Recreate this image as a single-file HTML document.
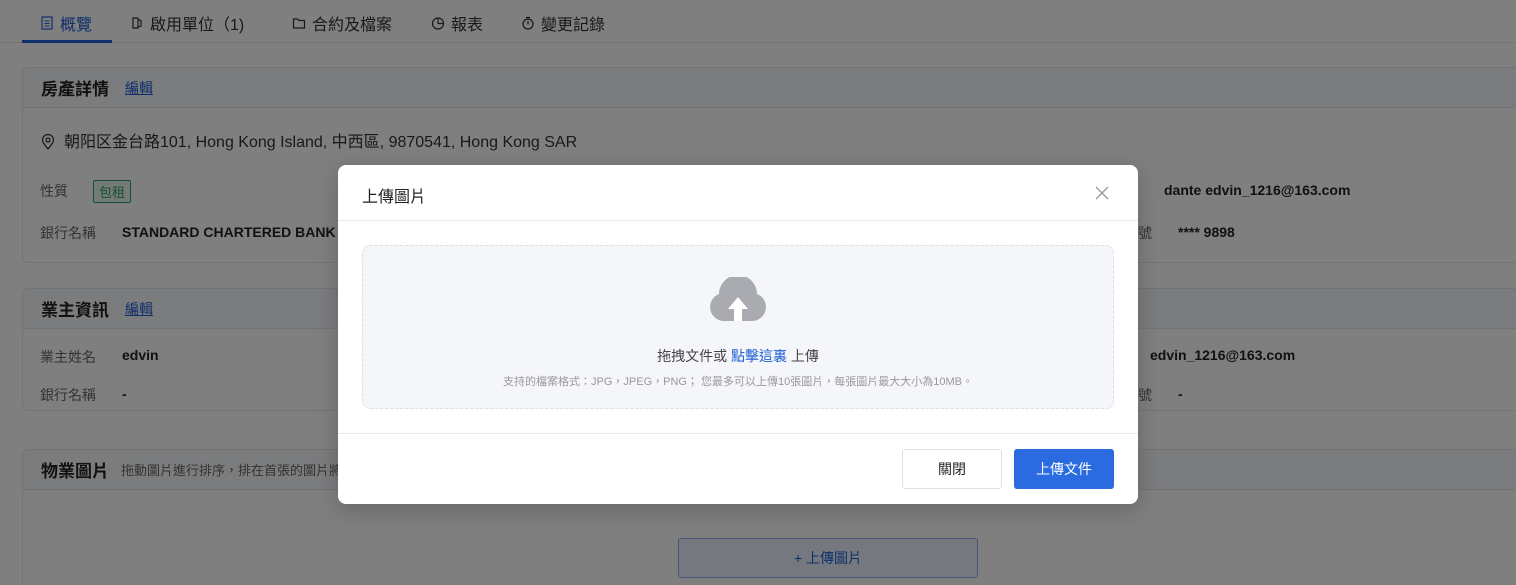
<!DOCTYPE html>
<html><head><meta charset="utf-8"><style>
*{box-sizing:border-box;margin:0;padding:0}
html,body{width:1516px;height:585px;overflow:hidden}
body{background:#fff;font-family:"Liberation Sans","Noto Sans CJK TC",sans-serif;color:#333;position:relative;font-size:14px}
.abs{position:absolute}
.tabs{position:absolute;left:0;top:0;width:1516px;height:43px;border-bottom:1px solid #e5e6eb}
.tab{position:absolute;top:11px;font-size:16px;color:#333;white-space:nowrap;display:flex;align-items:center;gap:6px}
.tab svg{width:14px;height:14px}
.card{position:absolute;left:22px;width:1520px;border:1px solid #e5e6eb;border-radius:6px;background:#fff}
.ch{height:40px;background:#f7f8fa;border-bottom:1px solid #e5e6eb;padding-left:18px;display:flex;align-items:center;border-radius:6px 6px 0 0}
.ch b{font-size:17px;color:#222}
.ch a{color:#1d5fd6;text-decoration:underline;font-size:14px;margin-left:16px}
.lbl{position:absolute;color:#666;font-size:14px}
.val{position:absolute;font-weight:bold;font-size:14px;color:#222}
.ov{position:absolute;left:0;top:0;width:1516px;height:585px;background:rgba(0,0,0,0.5)}
.modal{position:absolute;left:338px;top:165px;width:800px;height:339px;background:#fff;border-radius:8px;box-shadow:0 6px 24px rgba(0,0,0,.2)}
</style></head><body>
<div class="tabs">
<div class="tab" style="left:40px;color:#1d5fd6"><svg viewBox="0 0 14 14"><rect x="2" y="1" width="10" height="12" fill="none" stroke="#1d5fd6" stroke-width="1.2"/><path d="M4.5 5H9.5M4.5 7.5H9.5M4.5 10H9.5" stroke="#1d5fd6"/></svg>概覽</div>
<div class="abs" style="left:22px;top:40px;width:90px;height:3px;background:#1d5fd6"></div>
<div class="tab" style="left:130px"><svg viewBox="0 0 14 14"><path d="M3 2H8V12H3ZM8 3.5L11 4.5V10L8 11" fill="none" stroke="#333" stroke-width="1.2"/></svg>啟用單位（1)</div>
<div class="tab" style="left:292px"><svg viewBox="0 0 14 14"><path d="M1.5 3H5.5L7 4.5H12.5V12H1.5Z" fill="none" stroke="#333" stroke-width="1.2"/></svg>合約及檔案</div>
<div class="tab" style="left:431px"><svg viewBox="0 0 14 14"><circle cx="7" cy="7.5" r="5.5" fill="none" stroke="#333" stroke-width="1.2"/><path d="M7 2V7.5H12.5" fill="none" stroke="#333" stroke-width="1.2"/></svg>報表</div>
<div class="tab" style="left:521px"><svg viewBox="0 0 14 14"><circle cx="7" cy="8" r="5" fill="none" stroke="#333" stroke-width="1.2"/><path d="M5 1.5H9M7 5V8.5" stroke="#333" stroke-width="1.2"/></svg>變更記錄</div>
</div>
<div class="card" style="top:67px;height:196px"><div class="ch"><b>房產詳情</b><a>編輯</a></div></div>
<svg class="abs" style="left:41px;top:134px" width="14" height="16" viewBox="0 0 14 16"><path d="M7 15C3 10 1.5 8 1.5 6A5.5 5.5 0 0 1 12.5 6C12.5 8 11 10 7 15Z" fill="none" stroke="#333" stroke-width="1.2"/><circle cx="7" cy="6" r="2" fill="none" stroke="#333" stroke-width="1.2"/></svg>
<div class="abs" style="left:64px;top:128px;font-size:16px;color:#333">朝阳区金台路101, Hong Kong Island, 中西區, 9870541, Hong Kong SAR</div>
<div class="lbl" style="left:40px;top:181px">性質</div>
<div class="abs" style="left:93px;top:180px;border:1px solid #2a9d6f;color:#2a9d6f;background:#e8f6ef;font-size:13px;padding:1px 5px;border-radius:2px">包租</div>
<div class="lbl" style="left:40px;top:223px">銀行名稱</div>
<div class="val" style="left:122px;top:224px">STANDARD CHARTERED BANK</div>
<div class="val" style="left:1164px;top:182px">dante edvin_1216@163.com</div>
<div class="lbl" style="left:1138px;top:223px">號</div>
<div class="val" style="left:1178px;top:224px">**** 9898</div>
<div class="card" style="top:288px;height:123px"><div class="ch"><b>業主資訊</b><a>編輯</a></div></div>
<div class="lbl" style="left:40px;top:347px">業主姓名</div><div class="val" style="left:122px;top:347px">edvin</div>
<div class="lbl" style="left:40px;top:385px">銀行名稱</div><div class="val" style="left:122px;top:386px">-</div>
<div class="val" style="left:1150px;top:347px">edvin_1216@163.com</div>
<div class="lbl" style="left:1138px;top:385px">號</div><div class="val" style="left:1178px;top:386px">-</div>
<div class="card" style="top:449px;height:140px"><div class="ch"><b>物業圖片</b><span style="font-size:13px;color:#666;margin-left:12px">拖動圖片進行排序，排在首張的圖片將作為封面</span></div></div>
<div class="abs" style="left:678px;top:538px;width:300px;height:40px;border:1px solid #8fb3ee;background:#eaf1fd;border-radius:3px;color:#1d5fd6;text-align:center;line-height:38px">+ 上傳圖片</div>
<div class="ov"></div>
<div class="modal">
<div style="height:56px;border-bottom:1px solid #e8e8e8;padding:18px 24px;font-size:16px;color:#222">上傳圖片</div>
<svg class="abs" style="left:756px;top:20px" width="16" height="16" viewBox="0 0 16 16"><path d="M2 2L14 14M14 2L2 14" stroke="#999" stroke-width="1.3"/></svg>
<div class="abs" style="left:24px;top:80px;width:752px;height:164px;background:#f5f6f9;border:1px dashed #dcdfe6;border-radius:8px">
<svg class="abs" style="left:346px;top:31px" width="58" height="44" viewBox="0 0 58 44"><path d="M14 44A14 14 0 0 1 10 17A19 19 0 0 1 48 17A14 14 0 0 1 44 44Z" fill="#a9abb1"/><path d="M29 20L19 32H25V44H33V32H39Z" fill="#fff"/></svg>
<div class="abs" style="left:0;width:100%;top:100px;text-align:center;font-size:14px;color:#444">拖拽文件或 <span style="color:#1d5fd6">點擊這裏</span> 上傳</div>
<div class="abs" style="left:0;width:100%;top:127px;text-align:center;font-size:11px;color:#999">支持的檔案格式：JPG，JPEG，PNG； 您最多可以上傳10張圖片，每張圖片最大大小為10MB。</div>
</div>
<div class="abs" style="left:0;top:268px;width:800px;border-top:1px solid #e8e8e8"></div>
<div class="abs" style="left:564px;top:284px;width:100px;height:40px;border:1px solid #dcdfe6;border-radius:3px;text-align:center;line-height:38px;color:#222">關閉</div>
<div class="abs" style="left:676px;top:284px;width:100px;height:40px;background:#2a6be0;border-radius:3px;text-align:center;line-height:40px;color:#fff">上傳文件</div>
</div>
</body></html>
